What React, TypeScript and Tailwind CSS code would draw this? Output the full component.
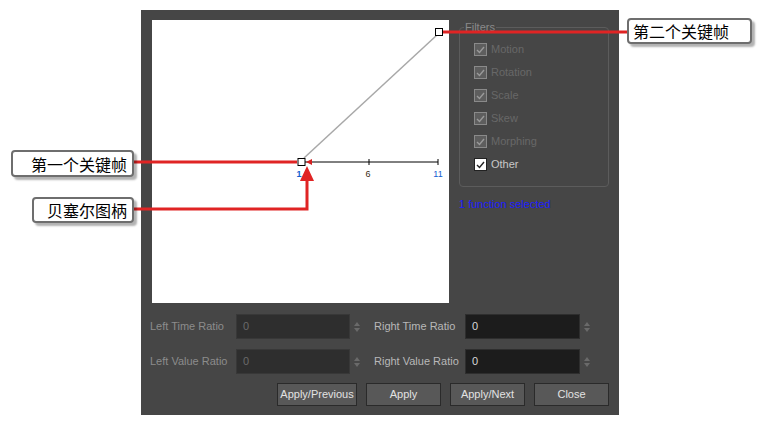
import React from "react";

const font = { fontFamily: '"Liberation Sans", Arial, sans-serif' };
const cjk = { fontFamily: '"Noto Sans CJK SC", "Noto Sans", sans-serif' };

const filters = [
  { label: "Motion", on: false },
  { label: "Rotation", on: false },
  { label: "Scale", on: false },
  { label: "Skew", on: false },
  { label: "Morphing", on: false },
  { label: "Other", on: true },
];

function Check({ enabled }: { enabled: boolean }) {
  return (
    <div
      className={
        enabled
          ? "w-[13px] h-[13px] bg-white border border-[#222] flex items-center justify-center"
          : "w-[13px] h-[13px] bg-[#5e5e5e] border border-[#8a8a8a] flex items-center justify-center"
      }
    >
      <svg width="9" height="8" viewBox="0 0 9 8">
        <path
          d="M1 4 L3.5 6.5 L8 1"
          fill="none"
          stroke={enabled ? "#222" : "#9a9a9a"}
          strokeWidth="1.4"
        />
      </svg>
    </div>
  );
}

function Spinner() {
  return (
    <svg width="6" height="10" viewBox="0 0 6 10">
      <path d="M3 0 L6 4 L0 4 Z" fill="#6a6a6a" />
      <path d="M3 10 L6 6 L0 6 Z" fill="#6a6a6a" />
    </svg>
  );
}

function Field({ label, right }: { label: string; right?: boolean }) {
  return (
    <div className="flex items-center">
      <div className={right ? "w-[91px] text-[11px] text-[#b8b8b8]" : "w-[86px] text-[11px] text-[#8c8c8c]"}>{label}</div>
      <div
        className={
          right
            ? "w-[115px] h-[25px] bg-[#1c1c1c] border border-[#2e2e2e] text-[11px] text-[#d8d8d8] flex items-center pl-[6px]"
            : "w-[114px] h-[25px] bg-[#2e2e2e] border border-[#383838] text-[11px] text-[#6a6a6a] flex items-center pl-[6px]"
        }
      >
        0
      </div>
      <div className="w-[24px] flex justify-start pl-[4px]">
        <Spinner />
      </div>
    </div>
  );
}

function Btn({ label, w }: { label: string; w: string }) {
  return (
    <div
      className={`${w} h-[23px] bg-[#585858] border border-[#2a2a2a] text-[11px] text-[#e2e2e2] flex items-center justify-center`}
    >
      {label}
    </div>
  );
}

function Callout({ text, className, textClass }: { text: string; className: string; textClass: string }) {
  return (
    <div
      className={`absolute ${className} bg-white border-2 border-[#6e6e6e] rounded-[4px] shadow-[3px_3px_2px_rgba(0,0,0,0.3)] flex items-center ${textClass} text-[16px] text-black`}
      style={cjk}
    >
      {text}
    </div>
  );
}

export default function App() {
  return (
    <div className="relative w-[767px] h-[426px] bg-white overflow-hidden" style={font}>
      <div className="ml-[141px] pt-[10px]">
        <div className="w-[478px] h-[405px] bg-[#464646] pt-[10px] pl-[11px]">
          <div className="flex">
            <div className="relative w-[297px] h-[283px] bg-white">
              <svg width="297" height="283" className="absolute left-0 top-0">
                <line x1="152" y1="138" x2="285" y2="15" stroke="#a8a8a8" strokeWidth="1.5" />
                <line x1="150" y1="142" x2="286" y2="142" stroke="#000" strokeWidth="1" />
                <line x1="217" y1="139" x2="217" y2="145" stroke="#000" />
                <line x1="286" y1="139" x2="286" y2="145" stroke="#000" />
                <rect x="146" y="138.5" width="7" height="7" fill="#fff" stroke="#000" strokeWidth="1" />
                <rect x="283.5" y="8.5" width="7" height="7" fill="#fff" stroke="#000" strokeWidth="1" />
                <path d="M154 142 L160 139 L160 145 Z" fill="#d42020" />
                <text x="147" y="157" fontSize="9" fill="#1060d0" textAnchor="middle" fontWeight="bold">1</text>
                <text x="216" y="157" fontSize="9" fill="#3a2a10" textAnchor="middle">6</text>
                <text x="286" y="157" fontSize="9" fill="#1060d0" textAnchor="middle">11</text>
              </svg>
            </div>
            <div className="ml-[10px] w-[150px]">
              <div className="relative mt-[7px] h-[160px] border border-[#5c5c5c] rounded-[4px] pt-[15px] pl-[14px]">
                <div className="absolute left-[4px] top-[-8px] bg-[#464646] px-[1px] text-[11px] text-[#8a8a8a] leading-[14px]">
                  Filters
                </div>
                <div className="flex flex-col gap-[10px]">
                  {filters.map((f) => (
                    <div key={f.label} className="flex items-center h-[13px]">
                      <Check enabled={f.on} />
                      <span className={f.on ? "ml-[4px] text-[11px] text-[#c8c8c8]" : "ml-[4px] text-[11px] text-[#686868]"}>
                        {f.label}
                      </span>
                    </div>
                  ))}
                </div>
              </div>
              <div className="mt-[9px] text-[11px] text-[#1c1cff]">1 function selected</div>
            </div>
          </div>
          <div className="mt-[11px] flex flex-col gap-[10px] ml-[-2px]">
            <div className="flex">
              <Field label="Left Time Ratio" />
              <Field label="Right Time Ratio" right />
            </div>
            <div className="flex">
              <Field label="Left Value Ratio" />
              <Field label="Right Value Ratio" right />
            </div>
          </div>
          <div className="mt-[9px] flex ml-[125px] gap-[9px]">
            <Btn label="Apply/Previous" w="w-[80px]" />
            <Btn label="Apply" w="w-[75px]" />
            <Btn label="Apply/Next" w="w-[75px]" />
            <Btn label="Close" w="w-[75px]" />
          </div>
        </div>
      </div>

      <svg width="767" height="426" className="absolute left-0 top-0 pointer-events-none">
        <line x1="134" y1="162" x2="297" y2="162" stroke="#e02424" strokeWidth="3" />
        <path d="M134 209 L307 209 L307 178" fill="none" stroke="#e02424" strokeWidth="3" />
        <path d="M300 181 L307 166 L314 181 Z" fill="#e02424" />
        <line x1="443" y1="32" x2="627" y2="32" stroke="#e02424" strokeWidth="3" />
      </svg>

      <Callout text="第一个关键帧" className="left-[11px] top-[150px] w-[123px] h-[27px]" textClass="justify-end pr-[5px]" />
      <Callout text="贝塞尔图柄" className="left-[32px] top-[197px] w-[102px] h-[26px]" textClass="justify-end pr-[5px]" />
      <Callout text="第二个关键帧" className="left-[627px] top-[18px] w-[125px] h-[26px]" textClass="justify-start pl-[4px]" />
    </div>
  );
}
